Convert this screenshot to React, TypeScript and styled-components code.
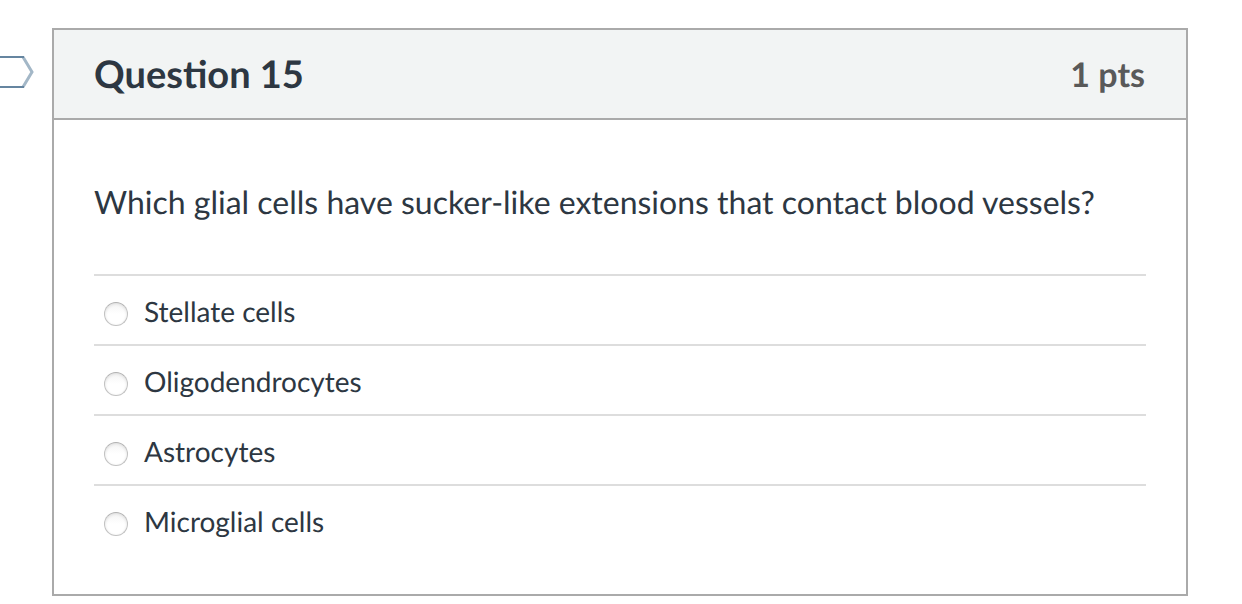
import React from "react";
import styled, { createGlobalStyle } from "styled-components";

const GlobalStyle = createGlobalStyle`
  * { box-sizing: border-box; }
  body {
    margin: 0;
    background: #fff;
    color: #2d3742;
    font-family: Lato, "Liberation Sans", sans-serif;
    text-rendering: geometricPrecision;
  }
`;

const Page = styled.main`
  display: flex;
  align-items: flex-start;
  padding: 28px 54px 8px 0;
`;

const FlagButton = styled.button`
  flex: none;
  width: 52px;
  height: 34px;
  margin-top: 27px;
  padding: 0;
  border: 0;
  background: none;
  text-align: left;
  svg { display: block; }
`;

const Card = styled.section`
  flex: 1;
  border: 2px solid #aaa;
`;

const Header = styled.header`
  display: flex;
  align-items: center;
  justify-content: space-between;
  height: 90px;
  padding: 2px 41px 0 40px;
  background: #f2f4f4;
  border-bottom: 2px solid #aaa;
`;

const Title = styled.h1`
  margin: 0;
  padding-bottom: 2px;
  font-size: 38px;
  line-height: 48px;
  font-weight: 700;
`;

const Points = styled.span`
  font-size: 34px;
  line-height: 48px;
  font-weight: 700;
  color: #595959;
`;

const Body = styled.fieldset`
  margin: 0;
  padding: 58px 40px 40px;
  border: 0;
  min-width: 0;
`;

const Prompt = styled.legend`
  float: left;
  width: 100%;
  margin: 0 0 48px;
  padding: 0;
  font-size: 32px;
  line-height: 48px;
`;

const Answers = styled.div`
  clear: both;
`;

const Answer = styled.label`
  display: flex;
  align-items: center;
  gap: 16px;
  height: 70px;
  padding: 2px 10px 0;
  border-top: 2px solid #ddd;
  font-size: 28px;
  line-height: 40px;
`;

const Radio = styled.input`
  appearance: none;
  flex: none;
  width: 24px;
  height: 24px;
  margin: 6px 0 0;
  border: 1px solid #c2c2c2;
  border-top-color: #b0b0b0;
  border-radius: 50%;
  background: linear-gradient(#f4f4f4, #fff 50%);
  box-shadow: inset 0 1px 3px #ddd;
  &:checked { background: radial-gradient(#2d3742 40%, #fff 45%); }
`;

const answers = ["Stellate cells", "Oligodendrocytes", "Astrocytes", "Microglial cells"];

export default function App() {
  return (
    <>
      <GlobalStyle />
      <Page>
        <FlagButton type="button" aria-label="Flag question">
          <svg width="36" height="34" viewBox="0 0 36 34" fill="none">
            <path d="M23 2L32 17L23 32" stroke="#a3b7c7" strokeWidth="3" />
            <path d="M0 2H24M0 32H24" stroke="#6585a0" strokeWidth="2" />
          </svg>
        </FlagButton>
        <Card>
          <Header>
            <Title>Question 15</Title>
            <Points>1 pts</Points>
          </Header>
          <Body>
            <Prompt>Which glial cells have sucker-like extensions that contact blood vessels?</Prompt>
            <Answers>
              {answers.map((text) => (
                <Answer key={text}>
                  <Radio type="radio" name="question-15" value={text} />
                  <span>{text}</span>
                </Answer>
              ))}
            </Answers>
          </Body>
        </Card>
      </Page>
    </>
  );
}
